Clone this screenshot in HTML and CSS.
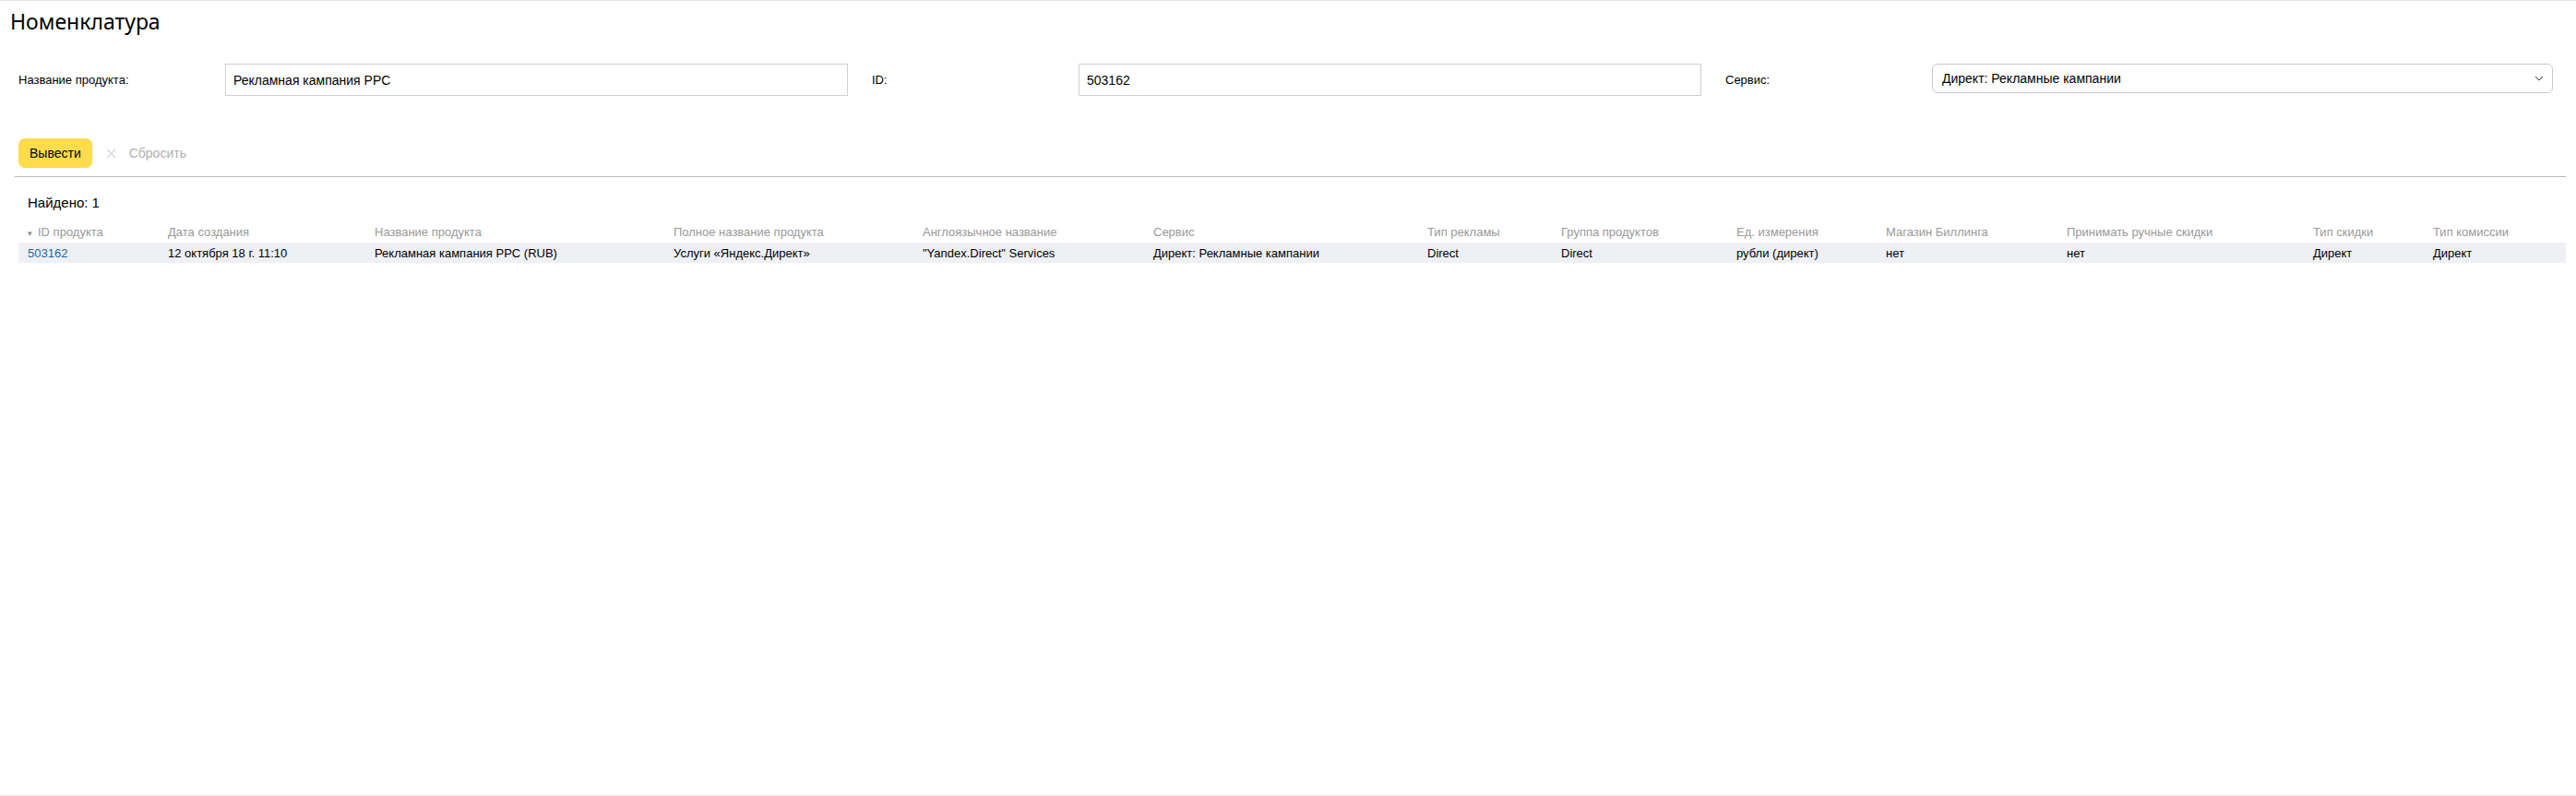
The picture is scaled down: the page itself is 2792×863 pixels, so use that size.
FILE: index.html
```html
<!DOCTYPE html>
<html lang="ru">
<head>
<meta charset="utf-8">
<title>Номенклатура</title>
<link rel="stylesheet" href="styles.css">
</head>
<body>
<div class="frame">
  <h1 class="title">Номенклатура</h1>
  <div class="content">
    <form class="filters">
      <div class="field">
        <label class="label">Название продукта:</label>
        <div class="input">Рекламная кампания PPC</div>
      </div>
      <div class="field">
        <label class="label">ID:</label>
        <div class="input">503162</div>
      </div>
      <div class="field">
        <label class="label">Сервис:</label>
        <div class="select">
          <span>Директ: Рекламные кампании</span>
          <svg class="chevron" width="10" height="6" viewBox="0 0 10 6"><polyline points="1,1 5,5 9,1" fill="none" stroke="#333" stroke-width="1"/></svg>
        </div>
      </div>
    </form>
    <div class="actions">
      <button class="btn-primary" type="button">Вывести</button>
      <span class="reset"><svg class="reset-x" width="11" height="11" viewBox="0 0 11 11"><path d="M1 1L10 10M10 1L1 10" stroke="#bdbdbd" stroke-width="1" fill="none"/></svg>Сбросить</span>
    </div>
  </div>
  <div class="divider"></div>
  <div class="content">
    <div class="found">Найдено: 1</div>
    <table class="grid">
      <colgroup>
        <col class="c1"><col class="c2"><col class="c3"><col class="c4"><col class="c5"><col class="c6"><col class="c7"><col class="c8"><col class="c9"><col class="c10"><col class="c11"><col class="c12"><col class="c13">
      </colgroup>
      <thead>
        <tr>
          <th><span class="sort">▾</span>ID продукта</th>
          <th>Дата создания</th>
          <th>Название продукта</th>
          <th>Полное название продукта</th>
          <th>Англоязычное название</th>
          <th>Сервис</th>
          <th>Тип рекламы</th>
          <th>Группа продуктов</th>
          <th>Ед. измерения</th>
          <th>Магазин Биллинга</th>
          <th>Принимать ручные скидки</th>
          <th>Тип скидки</th>
          <th>Тип комиссии</th>
        </tr>
      </thead>
      <tbody>
        <tr>
          <td><a class="link" href="#">503162</a></td>
          <td>12 октября 18 г. 11:10</td>
          <td>Рекламная кампания PPC (RUB)</td>
          <td>Услуги «Яндекс.Директ»</td>
          <td>"Yandex.Direct" Services</td>
          <td>Директ: Рекламные кампании</td>
          <td>Direct</td>
          <td>Direct</td>
          <td>рубли (директ)</td>
          <td>нет</td>
          <td>нет</td>
          <td>Директ</td>
          <td>Директ</td>
        </tr>
      </tbody>
    </table>
  </div>
</div>
</body>
</html>
```

FILE: styles.css
```css
* { box-sizing: border-box; }

html, body {
  margin: 0;
  padding: 0;
  background: #fff;
}

body {
  font-family: "Liberation Sans", Arial, sans-serif;
  color: #000;
}

.frame {
  height: 863px;
  border-top: 1px solid #e8e8e8;
  border-bottom: 1px solid #e4e4e4;
}

.title {
  margin: 8px 0 0 11px;
  font-family: "Noto Sans", "Open Sans", sans-serif;
  font-weight: 400;
  font-size: 23px;
  line-height: 28px;
  color: #000;
}

.content {
  padding: 0 11px 0 20px;
}

.filters {
  display: flex;
  gap: 26px;
  margin-top: 32px;
  height: 35px;
}

.field {
  display: flex;
  align-items: center;
  width: 899px;
}

.label {
  width: 224px;
  flex: none;
  font-size: 13px;
  color: #000;
}

.input {
  width: 675px;
  height: 35px;
  border: 1px solid #cfcfcf;
  padding: 0 8px;
  display: flex;
  align-items: center;
  font-size: 14px;
}

.select {
  width: 673px;
  height: 32px;
  align-self: flex-start;
  border: 1px solid #c8c8c8;
  border-radius: 6px;
  padding: 0 9px 0 10px;
  display: flex;
  align-items: center;
  justify-content: space-between;
  font-size: 14px;
}

.chevron {
  display: block;
}

.actions {
  display: flex;
  align-items: center;
  margin-top: 46px;
  height: 32px;
}

.btn-primary {
  height: 32px;
  padding: 0 12px;
  border: none;
  border-radius: 7px;
  background: #ffdb4d;
  font-family: "Liberation Sans", Arial, sans-serif;
  font-size: 14px;
  color: #000;
}

.reset {
  display: flex;
  align-items: center;
  margin-left: 15px;
  font-size: 14px;
  color: #b0b0b0;
}

.reset-x {
  display: block;
  margin-right: 14px;
}

.divider {
  margin: 9px 11px 0 16px;
  height: 1px;
  background: #b8b8b8;
}

.found {
  margin-top: 18px;
  padding-left: 10px;
  font-size: 15px;
  line-height: 20px;
}

.grid {
  margin-top: 10px;
  border-collapse: collapse;
  table-layout: fixed;
  width: 2761px;
  font-size: 13px;
}

.grid th,
.grid td {
  text-align: left;
  padding: 0 0 0 10px;
  white-space: nowrap;
  overflow: hidden;
}

.grid th {
  font-weight: 400;
  color: #999;
  height: 23px;
  vertical-align: middle;
}

.grid td {
  height: 22px;
  background: #eef0f4;
  color: #000;
}

.sort {
  font-size: 9px;
  margin-right: 6px;
  color: #888;
}

.link {
  color: #22669c;
  text-decoration: none;
}

.c1 { width: 152px; }
.c2 { width: 224px; }
.c3 { width: 324px; }
.c4 { width: 270px; }
.c5 { width: 250px; }
.c6 { width: 297px; }
.c7 { width: 145px; }
.c8 { width: 190px; }
.c9 { width: 162px; }
.c10 { width: 196px; }
.c11 { width: 267px; }
.c12 { width: 130px; }
.c13 { width: 154px; }
```
